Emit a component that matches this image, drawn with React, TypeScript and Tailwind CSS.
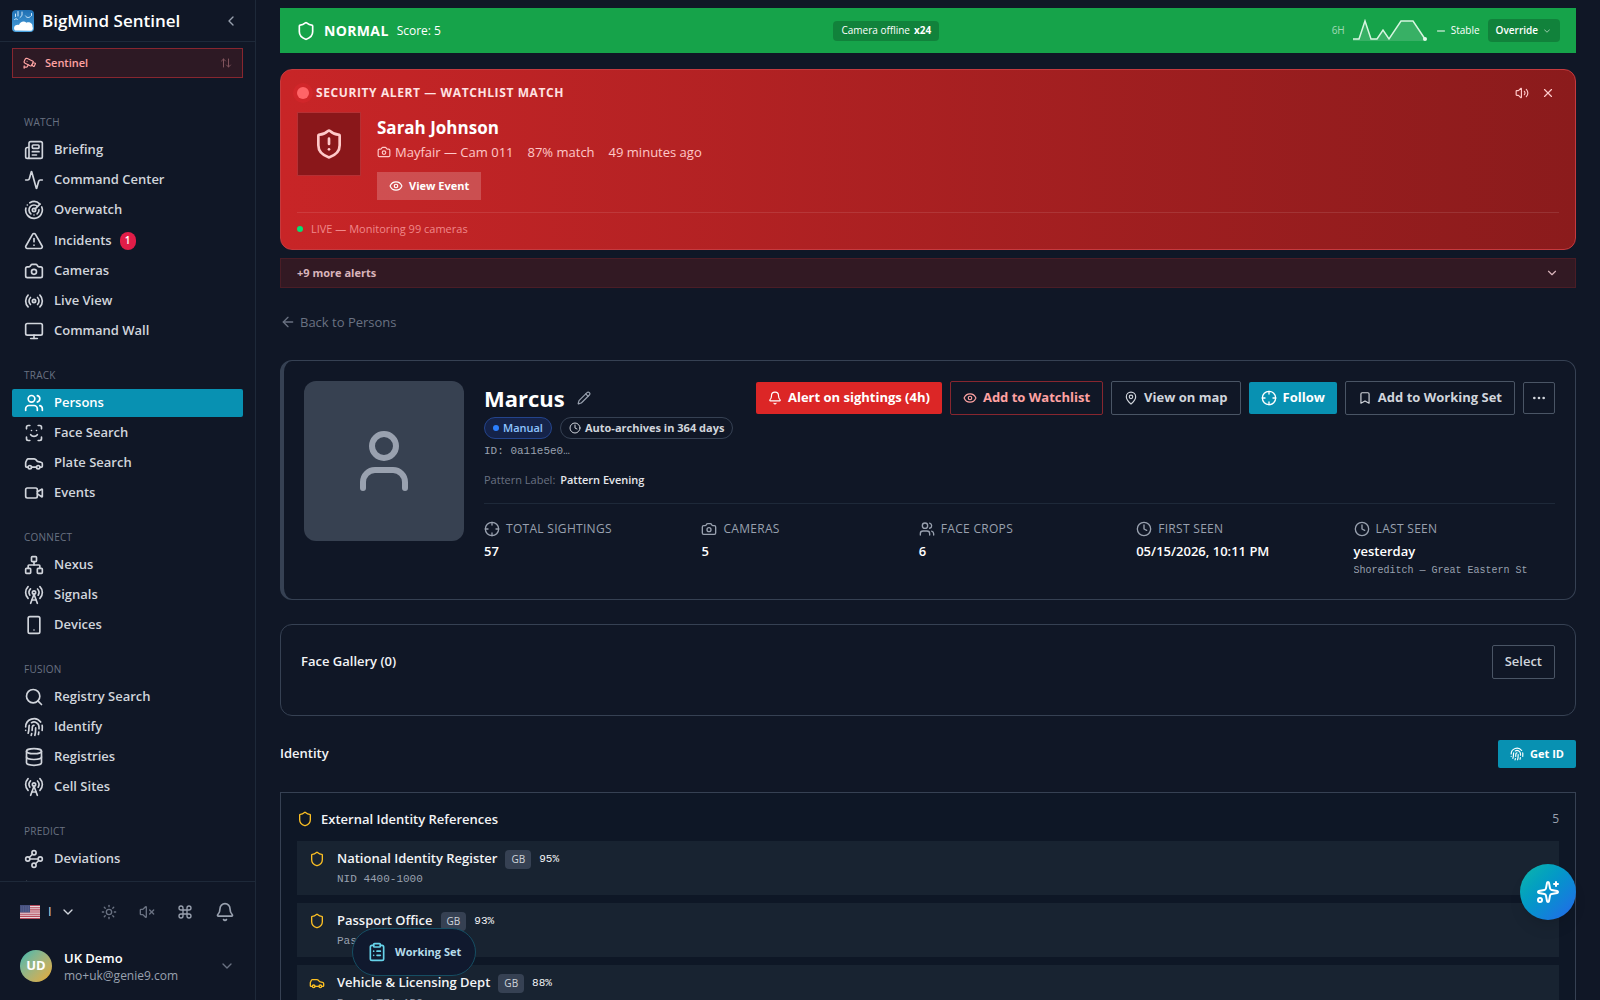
import {
  Activity, ArrowLeft, ArrowUpDown, Bell, Bookmark, Camera, Car, Cctv, ChartLine, ChevronDown, ChevronLeft,
  ClipboardList, Clock, Command, Crosshair, Database, Ellipsis, Eye, Fingerprint, MapPin, Minus, Monitor,
  Network, Newspaper, Pencil, Radar, Radio, RadioTower, ScanFace, Search, Shield, ShieldAlert, Smartphone,
  Sparkles, Sun, TriangleAlert, User, Users, Video, Volume2, VolumeX, Waypoints, X,
} from "lucide-react";
import type { LucideIcon } from "lucide-react";
import clsx from "clsx";

type NavItem = { label: string; icon: LucideIcon; badge?: number; active?: boolean };

const sections: { title: string; items: NavItem[] }[] = [
  {
    title: "Watch",
    items: [
      { label: "Briefing", icon: Newspaper },
      { label: "Command Center", icon: Activity },
      { label: "Overwatch", icon: Radar },
      { label: "Incidents", icon: TriangleAlert, badge: 1 },
      { label: "Cameras", icon: Camera },
      { label: "Live View", icon: Radio },
      { label: "Command Wall", icon: Monitor },
    ],
  },
  {
    title: "Track",
    items: [
      { label: "Persons", icon: Users, active: true },
      { label: "Face Search", icon: ScanFace },
      { label: "Plate Search", icon: Car },
      { label: "Events", icon: Video },
    ],
  },
  {
    title: "Connect",
    items: [
      { label: "Nexus", icon: Network },
      { label: "Signals", icon: RadioTower },
      { label: "Devices", icon: Smartphone },
    ],
  },
  {
    title: "Fusion",
    items: [
      { label: "Registry Search", icon: Search },
      { label: "Identify", icon: Fingerprint },
      { label: "Registries", icon: Database },
      { label: "Cell Sites", icon: RadioTower },
    ],
  },
  {
    title: "Predict",
    items: [
      { label: "Deviations", icon: Waypoints },
      { label: "Trends", icon: ChartLine },
    ],
  },
];

const stats: { label: string; value: string; icon: LucideIcon; note?: string }[] = [
  { label: "Total Sightings", value: "57", icon: Crosshair },
  { label: "Cameras", value: "5", icon: Camera },
  { label: "Face Crops", value: "6", icon: Users },
  { label: "First Seen", value: "05/15/2026, 10:11 PM", icon: Clock },
  { label: "Last Seen", value: "yesterday", icon: Clock, note: "Shoreditch — Great Eastern St" },
];

const references = [
  { name: "National Identity Register", match: "95%", value: "NID 4400-1000", icon: Shield },
  { name: "Passport Office", match: "93%", value: "Passport 533-1000", icon: Shield },
  { name: "Vehicle & Licensing Dept", match: "88%", value: "Reg. LT71 ABC", icon: Car },
];

function Logo() {
  return (
    <svg viewBox="0 0 22 22" className="h-[22px] w-[22px] shrink-0" aria-hidden="true">
      <defs>
        <linearGradient id="logo-sky" x1="0" y1="0" x2="0" y2="1">
          <stop offset="0" stopColor="#1f6fb2" />
          <stop offset="1" stopColor="#4aa3e0" />
        </linearGradient>
      </defs>
      <rect width="22" height="22" rx="4" fill="url(#logo-sky)" />
      <g fill="none" stroke="#cfe8fa" strokeWidth="1" strokeLinecap="round">
        <path d="M6 1.5v4.5M3.5 4v2.5M10 2v3.5l-2 2M13.500 6c1 2 4 2 5 .5M19.500 3.500v2M2.500 9.500c1-1 2.500-1 3 0" />
      </g>
      <path d="M3 20.500c-2.500-3 .5-6.500 4-5.500 1-3.500 5-4.500 7.500-2.300 3-1.200 6.300.800 6 4 .8 1.500 .4 3.300-1.200 4z" fill="#fff" />
    </svg>
  );
}

function Flag() {
  return (
    <svg viewBox="0 0 20 14" className="h-3.5 w-5 shrink-0" aria-hidden="true">
      <rect width="20" height="14" fill="#e8d5da" />
      <path d="M0 .5h20M0 2.700h20M0 4.900h20M0 7h20M0 9.200h20M0 11.400h20M0 13.500h20" stroke="#b5495b" strokeWidth="1.1" />
      <rect width="10" height="7.500" fill="#46507f" />
      <path d="M1.500 2h8M1.500 4h8M1.500 6h8" stroke="#8e95b8" strokeWidth=".6" strokeDasharray=".7 1" />
    </svg>
  );
}

function Sidebar() {
  return (
    <aside className="flex w-64 shrink-0 flex-col border-r border-gray-800">
      <div className="flex h-[42px] shrink-0 items-center gap-2 border-b border-gray-800 px-3">
        <Logo />
        <span className="flex-1 text-[17px] leading-6 font-semibold text-white">BigMind Sentinel</span>
        <button className="mr-1 text-gray-400" aria-label="Collapse sidebar">
          <ChevronLeft className="h-4 w-4" />
        </button>
      </div>

      <button className="mx-3 mt-1.5 flex h-[30px] shrink-0 items-center gap-2 border border-[#87262f] bg-[#2d1924] px-2.5 text-[11px] font-semibold text-red-300">
        <Cctv className="h-3.5 w-3.5" />
        Sentinel
        <ArrowUpDown className="ml-auto h-3 w-3 text-[#80535c]" />
      </button>

      <nav className="min-h-0 flex-1 overflow-hidden px-3 pt-3.5">
        {sections.map((section) => (
          <div key={section.title} className="pt-[22px]">
            <h2 className="px-3 pb-1.5 text-[10px] leading-4 tracking-wide text-gray-500 uppercase">{section.title}</h2>
            <ul className="space-y-0.5">
              {section.items.map(({ label, icon: Icon, badge, active }) => (
                <li key={label}>
                  <a
                    href="#"
                    className={clsx(
                      "flex items-center gap-2.5 rounded-xs px-3 text-[13px] font-semibold",
                      badge ? "h-[29px]" : "h-7",
                      active ? "bg-[#0891b2] text-white" : "text-gray-300",
                    )}
                  >
                    <Icon className="h-5 w-5" />
                    <span className={badge ? "-mr-0.5" : undefined}>{label}</span>
                    {badge && (
                      <span className="flex h-[18px] w-4 items-center justify-center rounded-full bg-[#e11d48] text-[10px] font-semibold text-white">
                        {badge}
                      </span>
                    )}
                  </a>
                </li>
              ))}
            </ul>
          </div>
        ))}
      </nav>

      <div className="shrink-0 border-t border-gray-800 px-5 pb-2.5">
        <div className="flex h-[60px] items-center text-gray-400">
          <button className="flex items-center gap-2 text-[13px] text-gray-300" aria-label="Language">
            <Flag />
            <span>I</span>
            <ChevronDown className="h-4 w-4" />
          </button>
          <div className="ml-auto flex items-center gap-[22px]">
            <button className="text-gray-500" aria-label="Theme"><Sun className="h-4 w-4" /></button>
            <button className="text-gray-500" aria-label="Unmute"><VolumeX className="h-4 w-4" /></button>
            <button aria-label="Shortcuts"><Command className="h-4 w-4" /></button>
            <button aria-label="Notifications"><Bell className="h-5 w-5" /></button>
          </div>
        </div>
        <button className="flex h-12 w-full items-center gap-3 text-left">
          <span className="flex h-8 w-8 items-center justify-center rounded-full bg-linear-to-br from-[#22b8b0] to-[#e8a820] text-[13px] font-bold text-white">
            UD
          </span>
          <span className="flex-1">
            <span className="block text-[13px] leading-5 font-semibold text-white">UK Demo</span>
            <span className="block text-[12px] leading-4 text-gray-400">mo+uk@genie9.com</span>
          </span>
          <ChevronDown className="h-4 w-4 text-gray-500" />
        </button>
      </div>
    </aside>
  );
}

function StatusBar() {
  return (
    <div className="flex h-[45px] items-center justify-between bg-[#16a34a] px-4 text-white">
      <div className="flex items-center gap-2">
        <Shield className="h-5 w-5" />
        <span className="text-[14px] font-bold tracking-wide">NORMAL</span>
        <span className="text-[12px]">Score: 5</span>
      </div>
      <div className="flex h-5 items-center gap-1 rounded bg-black/20 px-2 text-[10px]">
        Camera offline <span className="font-bold">x24</span>
      </div>
      <div className="flex items-center gap-2 text-[10px]">
        <span className="text-white/60">6H</span>
        <svg viewBox="0 0 74 24" className="h-6 w-[74px]" aria-hidden="true">
          <path d="M0 20h6l6-18 6 18h6l6-9 6 9 12-18h12l12 18v2H0z" fill="#fff" fillOpacity=".15" />
          <path d="M0 20h6l6-18 6 18h6l6-9 6 9 12-18h12l12 18" fill="none" stroke="#d6f5e0" strokeWidth="1.500" />
          <circle cx="72" cy="20" r="2" fill="#e5faec" />
        </svg>
        <Minus className="h-3 w-3" />
        <span className="-ml-1">Stable</span>
        <button className="flex h-[23px] items-center gap-1 rounded bg-black/20 px-2 font-semibold">
          Override <ChevronDown className="h-2.5 w-2.5 opacity-70" />
        </button>
      </div>
    </div>
  );
}

function AlertBanner() {
  return (
    <section className="mt-4 rounded-xl border border-[#c53a3e] bg-linear-to-r from-[#c82527] to-[#8b1b1c] px-4 pt-3 pb-3">
      <div className="mb-2 flex h-[22px] items-center">
        <span className="h-3 w-3 rounded-full bg-[#ff6467] ring-4 ring-red-500/20" />
        <h2 className="ml-[7px] flex-1 text-[12px] font-bold tracking-wider text-red-100">SECURITY ALERT — WATCHLIST MATCH</h2>
        <button className="mr-3 text-red-200" aria-label="Sound"><Volume2 className="h-3.5 w-3.5" /></button>
        <button className="mr-1 text-red-200" aria-label="Dismiss"><X className="h-3.5 w-3.5" /></button>
      </div>
      <div className="flex gap-4">
        <div className="flex h-16 w-16 shrink-0 items-center justify-center border border-[#b53034] bg-[#8a171a] text-red-200">
          <ShieldAlert className="h-8 w-8" />
        </div>
        <div>
          <h3 className="pt-0.5 text-[17px] leading-7 font-bold text-white">Sarah Johnson</h3>
          <p className="flex items-center gap-3.5 text-[13px] leading-5 text-red-200">
            <span className="flex items-center gap-1">
              <Camera className="h-3.5 w-3.5" /> Mayfair — Cam 011
            </span>
            <span>87% match</span>
            <span>49 minutes ago</span>
          </p>
          <button className="mt-2.5 flex h-7 items-center gap-1.5 bg-white/20 px-3 text-[11px] font-bold text-white">
            <Eye className="h-3.5 w-3.5" /> View Event
          </button>
        </div>
      </div>
      <div className="mt-3 flex items-center gap-2 border-t border-white/10 pt-2 text-[11px] leading-4 text-[#f0888a]">
        <span className="h-1.5 w-1.5 rounded-full bg-green-400" />
        LIVE — Monitoring 99 cameras
      </div>
    </section>
  );
}

const outline = "flex h-[34px] items-center gap-1.5 rounded-xs border px-3";

function PersonCard() {
  return (
    <section className="mt-7 flex gap-5 rounded-xl border border-l-4 border-gray-700 p-5">
      <div className="flex h-40 w-40 shrink-0 items-center justify-center rounded-xl bg-[#374151] text-gray-400">
        <User className="h-[72px] w-[72px]" />
      </div>
      <div className="min-w-0 flex-1">
        <div className="flex items-start justify-between">
          <div>
            <div className="flex h-[34px] items-center gap-3">
              <h1 className="text-[22px] font-bold text-white">Marcus</h1>
              <button className="text-gray-400" aria-label="Rename"><Pencil className="h-3.5 w-3.5" /></button>
            </div>
            <div className="mt-0.5 flex gap-2 text-[11px] font-bold">
              <span className="flex h-[22px] items-center gap-1 rounded-full border border-[#24448c] bg-[#152349] px-2 font-semibold text-blue-300">
                <span className="h-1.5 w-1.5 rounded-full bg-blue-500" />
                Manual
              </span>
              <span className="flex h-[22px] items-center gap-1 rounded-full border border-gray-700 px-2 text-gray-300">
                <Clock className="h-3 w-3" />
                Auto-archives in 364 days
              </span>
            </div>
          </div>
          <div className="flex items-center gap-2 text-[13px] font-bold whitespace-nowrap">
            <button className="flex h-8 items-center gap-1.5 rounded-xs bg-[#dc2626] px-3 text-white">
              <Bell className="h-3.5 w-3.5" /> Alert on sightings (4h)
            </button>
            <button className={clsx(outline, "border-[#87262f] text-red-300")}>
              <Eye className="h-3.5 w-3.5" /> Add to Watchlist
            </button>
            <button className={clsx(outline, "border-gray-600 text-gray-300")}>
              <MapPin className="h-3.5 w-3.5" /> View on map
            </button>
            <button className="flex h-8 items-center gap-1.5 rounded-xs bg-[#0891b2] px-3 text-white">
              <Crosshair className="h-4 w-4" /> Follow
            </button>
            <button className={clsx(outline, "border-gray-600 text-gray-300")}>
              <Bookmark className="h-3.5 w-3.5" /> Add to Working Set
            </button>
            <button className="flex h-8 w-8 items-center justify-center rounded-xs border border-gray-600 text-gray-300" aria-label="More">
              <Ellipsis className="h-4 w-4" />
            </button>
          </div>
        </div>
        <p className="mt-1 font-['Liberation_Mono',monospace] text-[11px] leading-4 text-gray-400">ID: 0a11e5e0…</p>
        <p className="mt-3 text-[11px] leading-[18px] text-gray-500">
          Pattern Label: <span className="ml-0.5 font-semibold text-gray-200">Pattern Evening</span>
        </p>
        <dl className="mt-3.5 grid grid-cols-5 gap-4 border-t border-gray-800 pt-[17px]">
          {stats.map(({ label, value, icon: Icon, note }) => (
            <div key={label}>
              <dt className="flex items-center gap-1.5 text-[12px] leading-4 tracking-wide text-gray-400 uppercase">
                <Icon className="h-4 w-4" />
                {label}
              </dt>
              <dd className="mt-1 text-[13px] leading-5 font-semibold text-white">{value}</dd>
              {note && (
                <dd className="mt-0.5 truncate font-['Liberation_Mono',monospace] text-[10px] leading-4 text-gray-400">{note}</dd>
              )}
            </div>
          ))}
        </dl>
      </div>
    </section>
  );
}

function IdentityReferences() {
  return (
    <section className="mt-6 border border-gray-700 bg-[#0e1726] p-4">
      <div className="flex items-center gap-2 leading-5">
        <Shield className="h-4 w-4 text-[#fbbf24]" />
        <h3 className="flex-1 text-[13px] font-semibold text-gray-100">External Identity References</h3>
        <span className="text-[12px] text-gray-400">5</span>
      </div>
      <ul className="mt-3 space-y-2">
        {references.map(({ name, match, value, icon: Icon }) => (
          <li key={name} className="flex gap-3 bg-[#182331] px-3 py-2">
            <Icon className="mt-0.5 h-4 w-4 shrink-0 text-[#fbbf24]" />
            <div>
              <div className="flex h-5 items-center gap-2">
                <span className="text-[13px] font-semibold text-gray-100">{name}</span>
                <span className="flex h-[19px] items-center rounded-sm bg-gray-700 px-1.5 text-[10px] text-gray-300">GB</span>
                <span className="font-['Liberation_Mono',monospace] text-[11px] text-gray-100">{match}</span>
              </div>
              <p className="mt-0.5 font-['Liberation_Mono',monospace] text-[11px] leading-4 text-gray-400">{value}</p>
            </div>
          </li>
        ))}
      </ul>
    </section>
  );
}

export default function App() {
  return (
    <div className="flex h-screen overflow-hidden bg-[#101726] font-['Open_Sans',sans-serif] text-gray-200">
      <Sidebar />

      <main className="min-w-0 flex-1 overflow-y-auto px-6 pt-2 pb-6 [scrollbar-width:none]">
        <StatusBar />
        <AlertBanner />
        <button className="mt-2 flex h-[30px] w-full items-center justify-between border border-[#4a1d26] bg-[#321923] px-4 text-[11px] font-bold text-[#d9b4bb]">
          +9 more alerts
          <ChevronDown className="h-3.5 w-3.5" />
        </button>
        <a href="#" className="mt-6 flex w-fit items-center gap-1 text-[13px] leading-5 text-gray-500">
          <ArrowLeft className="h-4 w-4" /> Back to Persons
        </a>

        <PersonCard />

        <section className="mt-6 rounded-xl border border-gray-700 p-5">
          <div className="mb-4 flex items-center justify-between text-[13px] font-semibold">
            <h2 className="text-gray-100">Face Gallery (0)</h2>
            <button className={clsx(outline, "border-gray-600 text-gray-300")}>Select</button>
          </div>
        </section>

        <div className="mt-6 flex h-7 items-center justify-between">
          <h2 className="text-[13px] font-semibold text-gray-100">Identity</h2>
          <button className="flex h-7 items-center gap-1.5 rounded-xs bg-[#0891b2] px-3 text-[11px] font-bold text-white">
            <Fingerprint className="h-3.5 w-3.5" /> Get ID
          </button>
        </div>

        <IdentityReferences />
      </main>

      <button className="fixed bottom-6 left-[352px] flex h-12 items-center gap-2 rounded-full border border-[#164e63] bg-[#10192e] px-3.5 text-[11px] font-bold text-[#b6dcea]">
        <ClipboardList className="h-5 w-5 text-[#67d3ea]" />
        Working Set
      </button>
      <button
        className="fixed right-6 bottom-20 flex h-14 w-14 items-center justify-center rounded-full bg-linear-to-br from-[#14b8a6] to-[#2563eb] text-white shadow-lg"
        aria-label="Assistant"
      >
        <Sparkles className="h-6 w-6" />
      </button>
    </div>
  );
}
